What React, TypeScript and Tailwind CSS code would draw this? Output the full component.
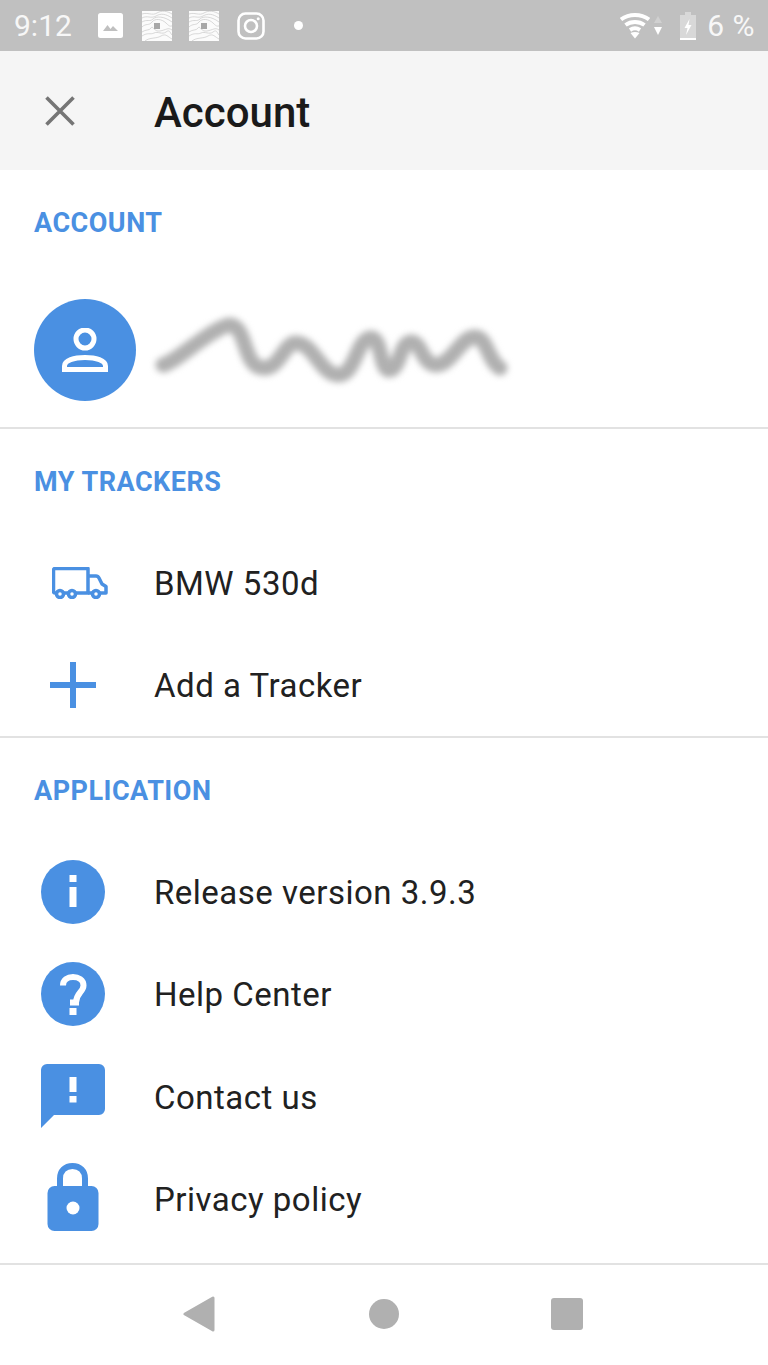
const BLUE = "#4a90e2";

const Topo = () => (
	<svg width="30" height="30" viewBox="0 0 30 30" className="shrink-0">
		<rect width="30" height="30" fill="#fbfbfb" />
		<g fill="none" stroke="#c8c8c8" strokeWidth="0.7">
			<path d="M0 3C6 1 10 5 15 2S25 0 30 3" />
			<path d="M0 7C5 4 9 8 14 5S24 3 30 7" />
			<path d="M0 11C5 8 8 11 11 8S22 5 30 11" />
			<path d="M0 16C4 12 7 15 10 11S20 8 24 12 28 15 30 15" />
			<path d="M0 21C4 18 7 20 9 17S12 21 18 20 26 16 30 19" />
			<path d="M0 25C6 21 8 24 12 22S20 24 24 21 28 22 30 24" />
			<path d="M3 30C8 26 14 28 19 25S26 26 30 28" />
		</g>
		<rect x="12" y="12" width="6" height="6" fill="#a8a8a8" />
	</svg>
);

const Section = ({ title }: { title: string }) => (
	<div className="h-[102.2px] flex items-center pl-[34px] pt-[4px]">
		<h2 className="text-[27px] font-bold tracking-[0.5px] text-[#4a90e2]">{title}</h2>
	</div>
);

const Row = ({ icon, label }: { icon: React.ReactNode; label: string }) => (
	<div className="h-[102.4px] flex items-center">
		<div className="w-[145px] shrink-0 flex justify-center">{icon}</div>
		<span className="ml-[9px] pt-[2px] text-[33px] tracking-[0.5px] text-[#212121]">{label}</span>
	</div>
);

const App = () => {
	return (
		<div className="w-[768px] h-[1365px] overflow-hidden bg-white font-['Roboto',sans-serif] flex flex-col">
			{/* status bar */}
			<div className="h-[51px] shrink-0 bg-[#c0c0c0] flex items-center text-[#f7f7f7]">
				<span className="ml-[14px] text-[30px] font-normal w-[57px]">9:12</span>
				<svg width="25" height="25" viewBox="0 0 25 25" className="ml-[27px]">
					<rect width="25" height="25" rx="2.5" fill="#fff" />
					<path d="M5 18l4.5-6 3 4 2.5-3 5 5z" fill="#c0c0c0" />
				</svg>
				<div className="ml-[19px]"><Topo /></div>
				<div className="ml-[17px]"><Topo /></div>
				<svg width="28" height="28" viewBox="0 0 28 28" fill="none" stroke="#fff" strokeWidth="2.6" className="ml-[18px]">
					<rect x="1.5" y="1.5" width="25" height="25" rx="7" />
					<circle cx="14" cy="14" r="6" />
					<circle cx="21.2" cy="6.8" r="1.5" fill="#fff" stroke="none" />
				</svg>
				<div className="ml-[29px] w-[9px] h-[9px] rounded-full bg-white" />
				<svg width="30" height="26" viewBox="0 0 30 26" className="ml-auto" fill="none" stroke="#fff" strokeWidth="4">
					<path d="M1 6.500C9 0.500 21 0.500 29 6.500" />
					<path d="M5.500 12C11 8 19 8 24.500 12" />
					<path d="M10 17C13 15 17 15 20 17" />
					<path d="M10.500 20L15 25.500L19.500 20C17 18.500 13 18.500 10.500 20Z" fill="#fff" stroke="none" />
				</svg>
				<svg width="8" height="19" viewBox="0 0 8 19" className="ml-[4px]">
					<path d="M4 0L8 7H0Z" fill="#d0d0d0" />
					<path d="M4 19L8 11H0Z" fill="#fff" />
				</svg>
				<svg width="16" height="28" viewBox="0 0 16 28" className="ml-[18px]">
					<path d="M5 0h6v3h5v25H0V3h5z" fill="#d8d8d8" />
					<rect y="26" width="16" height="2" fill="#fff" />
					<path d="M9.500 7L4.500 16h3l-1.500 7 5.500-10h-3z" fill="#fff" />
				</svg>
				<span className="ml-[11px] mr-[13px] text-[30px] tracking-[0.5px]">6 %</span>
			</div>

			{/* toolbar */}
			<div className="h-[119px] shrink-0 bg-[#f5f5f5] flex items-center">
				<svg width="30" height="30" viewBox="0 0 30 30" className="ml-[45px]" stroke="#757575" strokeWidth="3.6">
					<path d="M1.5 1.5L28.5 28.5M28.5 1.5L1.5 28.5" />
				</svg>
				<h1 className="ml-[79px] pt-[4px] text-[42px] font-medium text-[#1a1a1a] leading-none">Account</h1>
			</div>

			{/* account */}
			<div className="border-b-2 border-[#e2e2e2]">
				<Section title="ACCOUNT" />
				<div className="h-[155px] flex items-center">
					<div className="ml-[34px] w-[102px] h-[102px] rounded-full bg-[#4a90e2] flex items-center justify-center">
						<svg width="46" height="44" viewBox="0 0 46 44" fill="none" stroke="#fff" strokeWidth="5">
							<circle cx="23" cy="11" r="9" />
							<path d="M2.500 41.500V38C2.500 32.500 12 29.500 23 29.500S43.500 32.500 43.500 38V41.500Z" />
						</svg>
					</div>
					<svg width="400" height="90" viewBox="0 0 400 90" className="ml-[14px] blur-[3px]" fill="none" stroke="#b0b0b0" strokeLinecap="round" strokeLinejoin="round">
						<path
							d="M13 60C25 58 60 24 79 20C98 20 92 63 114 63C130 63 134 38 146 38C164 38 170 70 189 70C205 70 207 33 221 33C232 33 230 65 239 65C250 65 250 37 261 37C272 37 272 60 286 60C302 60 310 32 325 32C337 32 338 56 350 63"
							strokeWidth="15"
						/>
					</svg>
				</div>
			</div>

			{/* trackers */}
			<div className="border-b-2 border-[#e2e2e2]">
				<Section title="MY TRACKERS" />
				<Row
					label="BMW 530d"
					icon={
						<svg width="56" height="32" viewBox="0 0 56 32" fill="none" stroke={BLUE} strokeWidth="3.5" strokeLinejoin="round" className="ml-[15px]">
							<path d="M4.500 26H3a1.500 1.500 0 0 1-1.500-1.500V3A1.500 1.500 0 0 1 3 1.500H36V26H24" />
							<path d="M11.500 26H16.500" />
							<path d="M36 9H44Q46 9 47 11L50 17L54 19.500V26H48M40 26H36" />
							<circle cx="8" cy="27" r="3.500" />
							<circle cx="20" cy="27" r="3.500" />
							<circle cx="44" cy="27" r="3.500" />
						</svg>
					}
				/>
				<Row
					label="Add a Tracker"
					icon={
						<svg width="46" height="46" viewBox="0 0 46 46" fill={BLUE}>
							<rect x="20" width="6" height="46" />
							<rect y="20" width="46" height="6" />
						</svg>
					}
				/>
			</div>

			{/* application */}
			<div className="flex-1">
				<Section title="APPLICATION" />
				<Row
					label="Release version 3.9.3"
					icon={
						<svg width="66" height="66" viewBox="0 0 66 66">
							<circle cx="33" cy="33" r="32" fill={BLUE} />
							<rect x="29.500" y="16" width="7" height="7" fill="#fff" />
							<rect x="29.500" y="28" width="7" height="20" fill="#fff" />
						</svg>
					}
				/>
				<Row
					label="Help Center"
					icon={
						<svg width="66" height="66" viewBox="0 0 66 66">
							<circle cx="33" cy="33" r="32" fill={BLUE} />
							<path d="M23 24.500C23 19 27.500 16 33 16S43.500 19 43.500 24.500C43.500 31 36 32 36 41.500H30" fill="none" stroke="#fff" strokeWidth="6" />
							<rect x="29.500" y="47" width="7" height="7" fill="#fff" />
						</svg>
					}
				/>
				<Row
					label="Contact us"
					icon={
						<svg width="66" height="66" viewBox="0 0 66 66" fill={BLUE}>
							<path d="M7 1H59a6 6 0 0 1 6 6V46a6 6 0 0 1-6 6H14L1 65V7a6 6 0 0 1 6-6Z" />
							<rect x="29.500" y="14" width="7" height="15" fill="#fff" />
							<rect x="29.500" y="33" width="7" height="6.500" fill="#fff" />
						</svg>
					}
				/>
				<Row
					label="Privacy policy"
					icon={
						<svg width="52" height="68" viewBox="0 0 52 68" fill={BLUE} className="mb-[3px]">
							<path d="M13 26V15.500C13 8 18 3 25.500 3S38 8 38 15.500V26" fill="none" stroke={BLUE} strokeWidth="6" />
							<rect x="0.500" y="23" width="51" height="45" rx="7" />
							<circle cx="26" cy="45" r="6.500" fill="#fff" />
						</svg>
					}
				/>
			</div>

			{/* nav bar */}
			<div className="h-[102px] shrink-0 border-t-2 border-[#e2e2e2] bg-white flex items-center pb-[2px]">
				<svg width="32" height="36" viewBox="0 0 32 36" className="ml-[183px]">
					<path d="M30 2V34L2 18Z" fill="#b0b0b0" stroke="#b0b0b0" strokeWidth="3" strokeLinejoin="round" />
				</svg>
				<div className="ml-[154px] w-[30px] h-[30px] rounded-full bg-[#b0b0b0]" />
				<div className="ml-[152px] w-[32px] h-[32px] rounded-[3px] bg-[#b0b0b0]" />
			</div>
		</div>
	);
};

export default App;
